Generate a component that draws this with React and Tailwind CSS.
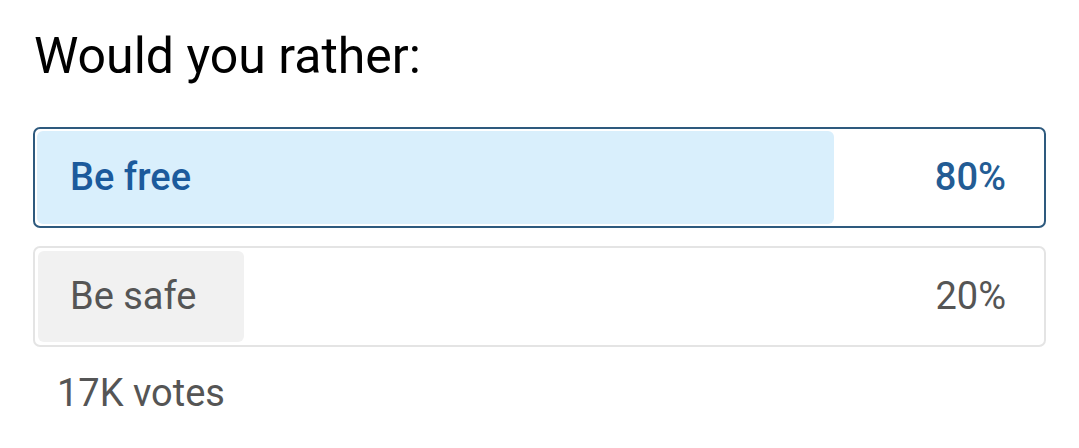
const options = [
  { label: 'Be free', pct: '80%', selected: true },
  { label: 'Be safe', pct: '20%', selected: false },
]

export default function App() {
  return (
    <div className="min-h-[448px] w-[1079px] bg-white pl-[33px] pr-[33px] pt-[31px]" style={{ fontFamily: 'Roboto, "Noto Sans", sans-serif' }}>
      <h1 className="ml-[1px] text-[50px] leading-[50px] text-black">Would you rather:</h1>

      <div className="mt-[46px] flex flex-col gap-[18px]">
        {options.map(opt => (
          <div
            key={opt.label}
            className={
              opt.selected
                ? 'relative flex h-[101px] items-center rounded-[7px] border-2 border-[#2e5a7e] p-[2px]'
                : 'relative flex h-[101px] items-center rounded-[7px] border-2 border-[#e4e4e4] p-[3px]'
            }
          >
            <div
              className={
                opt.selected
                  ? 'h-full w-[797px] rounded-[6px] bg-[#d9effc]'
                  : 'h-full w-[206px] rounded-[6px] bg-[#f1f1f1]'
              }
            />
            <div className="absolute inset-0 flex items-center justify-between pl-[35px] pr-[38px]">
              <span className={opt.selected ? 'text-[38px] font-medium text-[#1b5a9c]' : 'text-[38px] text-[#555555]'}>
                {opt.label}
              </span>
              <span className={opt.selected ? 'text-[38px] font-medium text-[#235c94]' : 'text-[38px] text-[#555555]'}>
                {opt.pct}
              </span>
            </div>
          </div>
        ))}
      </div>

      <div className="ml-[24px] mt-[27px] text-[38px] leading-[38px] text-[#555555]">17K votes</div>
    </div>
  )
}
